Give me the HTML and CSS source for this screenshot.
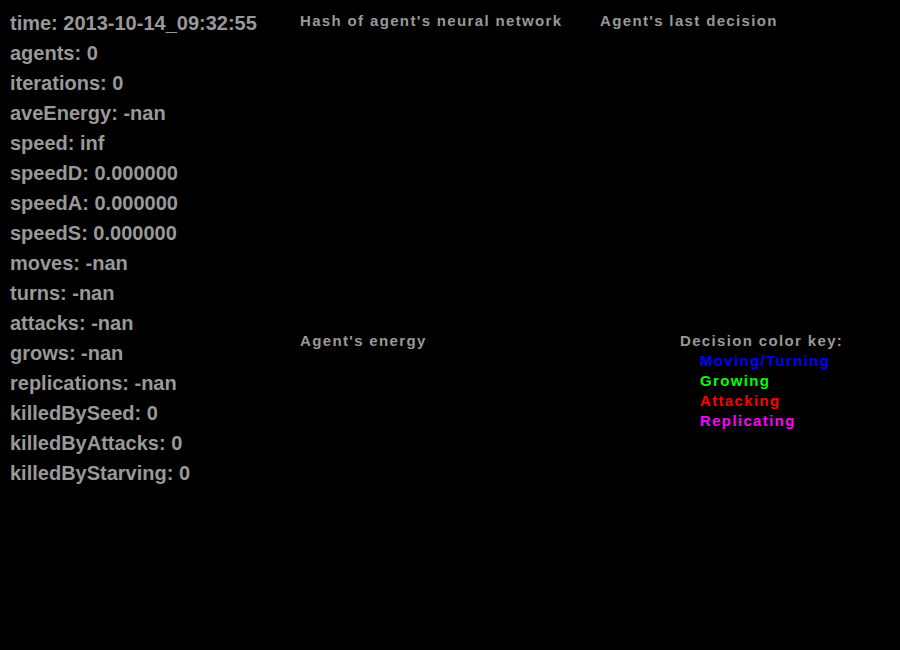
FILE: index.html
```html
<!DOCTYPE html>
<html>
<head>
<meta charset="utf-8">
<link rel="stylesheet" href="styles.css">
</head>
<body>
<div class="screen">
  <div class="stats">
    <div class="stat">time: 2013-10-14_09:32:55</div>
    <div class="stat">agents: 0</div>
    <div class="stat">iterations: 0</div>
    <div class="stat">aveEnergy: -nan</div>
    <div class="stat">speed: inf</div>
    <div class="stat">speedD: 0.000000</div>
    <div class="stat">speedA: 0.000000</div>
    <div class="stat">speedS: 0.000000</div>
    <div class="stat">moves: -nan</div>
    <div class="stat">turns: -nan</div>
    <div class="stat">attacks: -nan</div>
    <div class="stat">grows: -nan</div>
    <div class="stat">replications: -nan</div>
    <div class="stat">killedBySeed: 0</div>
    <div class="stat">killedByAttacks: 0</div>
    <div class="stat">killedByStarving: 0</div>
  </div>
  <div class="panels">
    <div class="row top">
      <div class="label hash">Hash of agent's neural network</div>
      <div class="label">Agent's last decision</div>
    </div>
    <div class="row bottom">
      <div class="label energy">Agent's energy</div>
      <div class="key">
        <div class="label">Decision color key:</div>
        <ul class="key-list">
          <li class="label blue">Moving/Turning</li>
          <li class="label green">Growing</li>
          <li class="label red">Attacking</li>
          <li class="label magenta">Replicating</li>
        </ul>
      </div>
    </div>
  </div>
</div>
</body>
</html>
```
FILE: styles.css
```css
html, body {
  margin: 0;
  padding: 0;
  background: #000;
}
body {
  width: 900px;
  height: 650px;
  overflow: hidden;
  font-family: "Liberation Sans", Arial, sans-serif;
  font-weight: bold;
  color: #999999;
}
.screen {
  display: flex;
  flex-direction: row;
}
.stats {
  width: 290px;
  padding: 8px 0 0 10px;
  box-sizing: border-box;
}
.stat {
  font-size: 20px;
  line-height: 30px;
  height: 30px;
  white-space: nowrap;
}
.panels {
  display: flex;
  flex-direction: column;
  padding-left: 10px;
}
.row {
  display: flex;
  flex-direction: row;
}
.top {
  padding-top: 11px;
  height: 331px;
  box-sizing: border-box;
}
.label {
  font-size: 15px;
  line-height: 20px;
  letter-spacing: 1.35px;
  white-space: nowrap;
}
.hash {
  width: 300px;
}
.energy {
  width: 380px;
}
.key-list {
  list-style: none;
  margin: 0;
  padding: 0 0 0 20px;
}
.blue { color: #0000ff; }
.green { color: #00ff00; }
.red { color: #ff0000; }
.magenta { color: #ff00ff; }
```
